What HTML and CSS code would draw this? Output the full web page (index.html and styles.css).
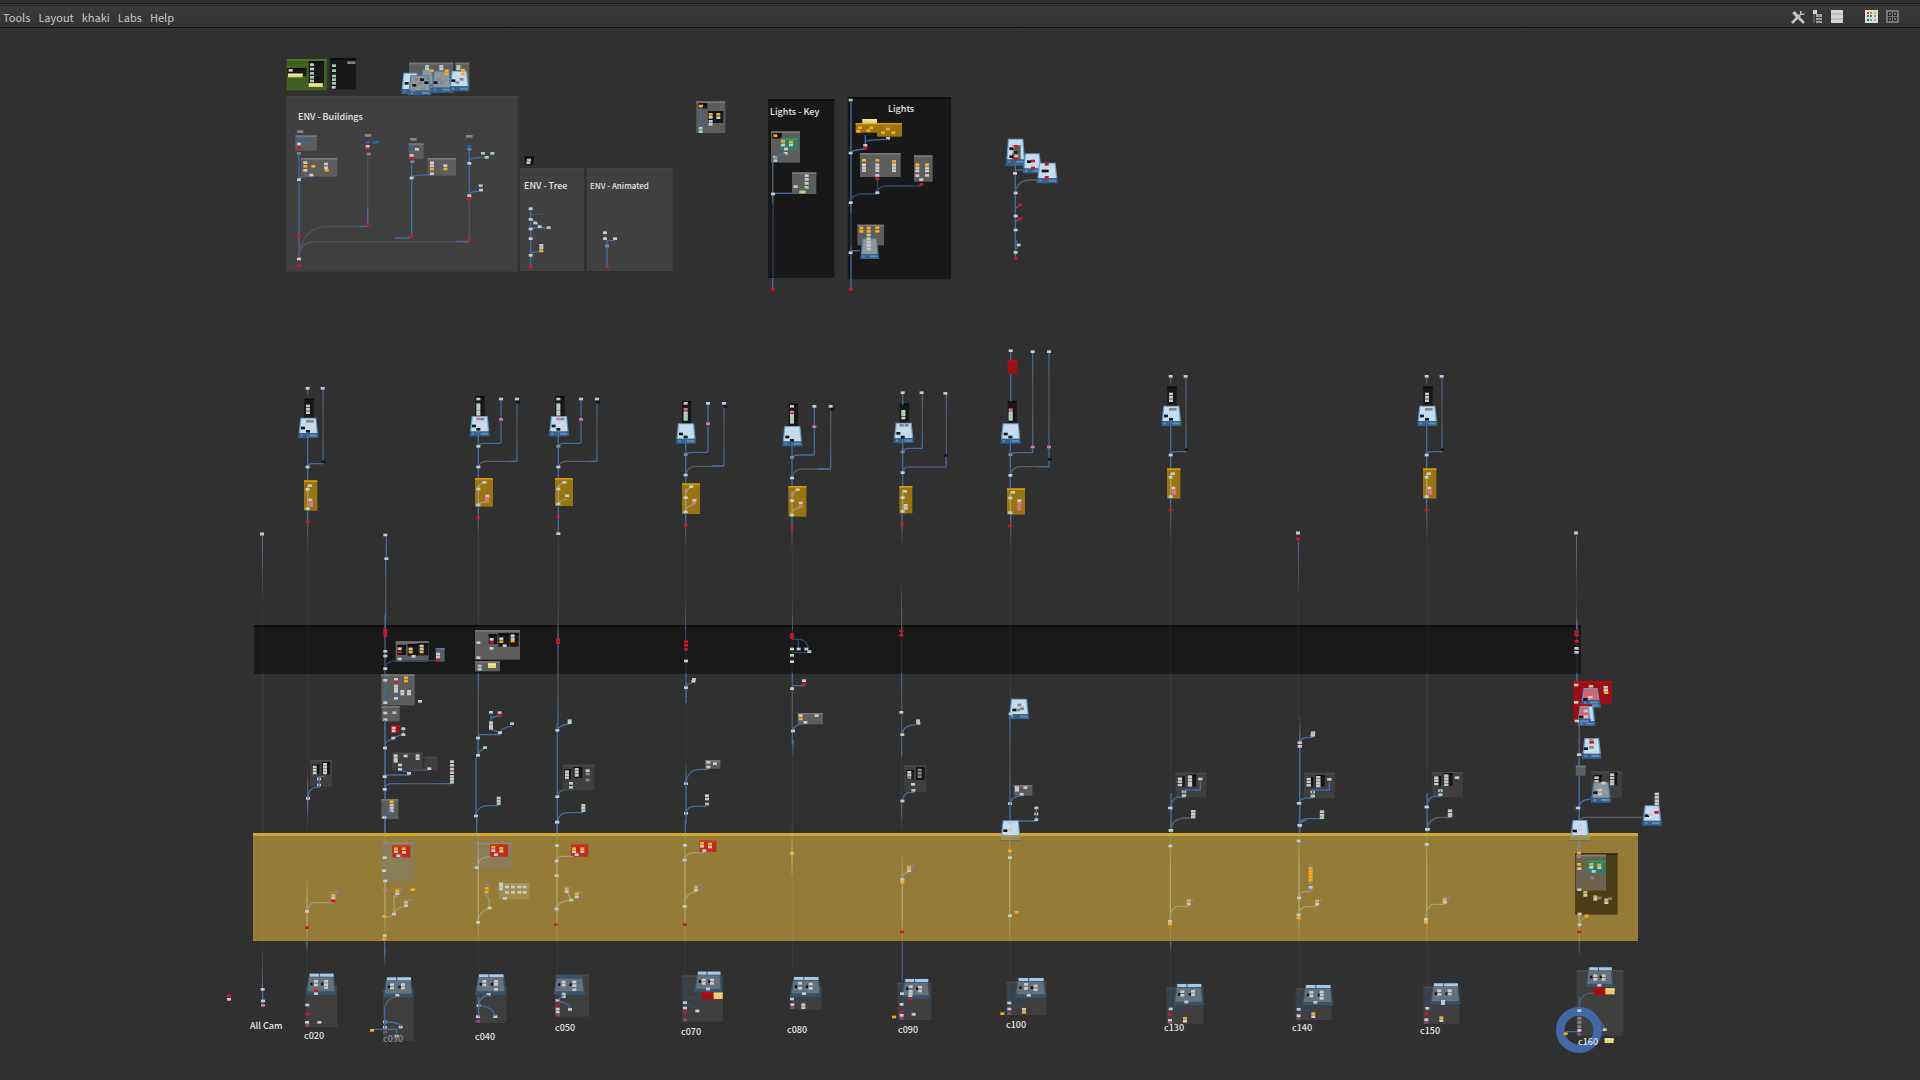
FILE: index.html
```html
<!DOCTYPE html>
<html lang="en">
<head>
<meta charset="utf-8">
<title>Network editor</title>
<link rel="stylesheet" href="styles.css">
</head>
<body>
<header class="menubar">
  <nav class="menus" aria-label="Main menu">
    <button type="button">Tools</button>
    <button type="button">Layout</button>
    <button type="button">khaki</button>
    <button type="button">Labs</button>
    <button type="button">Help</button>
  </nav>
  <div class="tools">
    <button type="button" aria-label="Settings"><svg width="14" height="14" viewBox="0 0 14 14"><path d="M1 13 9 5M5 5l8 8" stroke="#c4c4c4" stroke-width="2.6" fill="none"/><path d="M1 3l3-2 3 4-2 2zM9 1v4h4l1-2-2 1-2-1 1-2z" fill="#c4c4c4"/></svg></button>
    <button type="button" aria-label="Tree view"><svg width="10" height="14" viewBox="0 0 10 14"><path d="M0 0h4v4H0z" fill="#d0d0d0"/><path d="M3 4h6v3H3zM3 8h6v2H3zM3 11h6v2H3z" fill="#a9a9a9"/><path d="M1 4v9M6 4v9" stroke="#777" fill="none"/></svg></button>
    <button type="button" aria-label="List view"><svg width="12" height="14" viewBox="0 0 12 14"><path d="M0 0h12v13H0z" fill="#d6d6cf"/><path d="M0 4h12M0 9h12" stroke="#a4a49c"/></svg></button>
    <button type="button" aria-label="Colour palette" class="apart"><svg width="13" height="13" viewBox="0 0 13 13"><path d="M0 0h13v13H0z" fill="#dddddd"/><path d="M2 2h2v2H2z" fill="#c33"/><path d="M5 2h2v2H5z" fill="#d80"/><path d="M9 2h2v2H9z" fill="#db2"/><path d="M2 5h2v2H2z" fill="#36c"/><path d="M5 5h2v2H5z" fill="#294"/><path d="M9 5h2v2H9z" fill="#c77"/><path d="M2 9h2v2H2z" fill="#448"/><path d="M5 9h2v2H5z" fill="#3a8"/><path d="M9 9h2v2H9z" fill="#aa9"/></svg></button>
    <button type="button" aria-label="Shape palette"><svg width="13" height="13" viewBox="0 0 13 13"><path d="M0 0h13v13H0z" fill="#777"/><path d="M2 2h4v4H2zM7 2h4v4H7zM2 7h4v4H2zM7 7h4v4H7z" fill="#2b2b2b"/><path d="M3 4h2M8 4h2M3 9h2M8 9h2" stroke="#bbb"/></svg></button>
  </div>
</header>
<main>
<svg class="network" viewBox="0 28 1920 1052" role="img" aria-label="Node network">
  <defs>
    <linearGradient id="in" x1="0" y1="0" x2="0" y2="1"><stop offset="0" stop-color="#666" stop-opacity="0"/><stop offset=".5" stop-color="#777" stop-opacity=".5"/><stop offset="1" stop-color="#4775b5"/></linearGradient>
    <linearGradient id="out" x1="0" y1="0" x2="0" y2="1"><stop offset="0" stop-color="#4775b5"/><stop offset=".5" stop-color="#777" stop-opacity=".5"/><stop offset="1" stop-color="#666" stop-opacity="0"/></linearGradient>
    <linearGradient id="mid" x1="0" y1="0" x2="0" y2="1"><stop offset="0" stop-color="#41699c"/><stop offset=".35" stop-color="#555555"/><stop offset=".6" stop-color="#555555"/><stop offset="1" stop-color="#41699c"/></linearGradient>
    <linearGradient id="wash" x1="0" y1="0" x2="0" y2="1"><stop offset="0" stop-color="#c9c08f" stop-opacity=".1"/><stop offset=".3" stop-color="#c9c08f" stop-opacity=".6"/><stop offset=".7" stop-color="#c9c08f" stop-opacity=".6"/><stop offset="1" stop-color="#c9c08f" stop-opacity=".15"/></linearGradient>
  </defs>
  <rect class="band-dark" x="254" y="625" width="1327" height="49"/>
  <rect class="band-dark-top" x="254" y="625" width="1327" height="2"/>
  <rect class="band-gold" x="253" y="834" width="1385" height="107"/>
  <rect class="band-gold-top" x="253" y="833" width="1385" height="3"/>
  <rect class="band-gold-foot" x="253" y="940" width="1385" height="1"/>
  <g id="graph"></g>
  <g class="titles">
    <text x="298" y="120">ENV - Buildings</text>
    <text x="524" y="189">ENV - Tree</text>
    <text x="590" y="189" class="small">ENV - Animated</text>
    <text x="770" y="115">Lights - Key</text>
    <text x="888" y="112">Lights</text>
    <text x="250" y="1029">All Cam</text>
    <text x="304" y="1039">c020</text>
    <text x="383" y="1042" class="faded">c030</text>
    <text x="475" y="1040">c040</text>
    <text x="555" y="1031">c050</text>
    <text x="681" y="1035">c070</text>
    <text x="787" y="1033">c080</text>
    <text x="898" y="1033">c090</text>
    <text x="1006" y="1028">c100</text>
    <text x="1164" y="1031">c130</text>
    <text x="1292" y="1031">c140</text>
    <text x="1420" y="1034">c150</text>
    <text x="1578" y="1045">c160</text>
  </g>
</svg>
</main>
<script src="graph.js"></script>
</body>
</html>
```
FILE: styles.css
```css
* { box-sizing: border-box; }
body {
  margin: 0;
  background: #303030;
  color: #c8c8c8;
  font-family: "Noto Sans CJK SC", "Open Sans", sans-serif;
}
.menubar {
  display: flex;
  align-items: center;
  justify-content: space-between;
  height: 28px;
  padding: 6px 21px 0 3px;
  border-bottom: 1px solid #121212;
  background: linear-gradient(#303030 0 3px, #202020 3px 4px, #3b3b3b 4px 5px, #242424 5px 6px, #3a3a3a 6px, #333333);
}
.menus, .tools { display: flex; align-items: center; }
.menus { gap: 8px; }
.tools { gap: 8px; }
.menubar button {
  display: flex;
  padding: 0;
  border: 0;
  background: none;
  color: inherit;
  font: inherit;
  font-size: 11px;
  line-height: 16px;
}
.tools .apart { margin-left: 14px; }
.network { display: block; width: 100%; height: auto; }

.band-dark { fill: #191919; }
.band-dark-top { fill: #0d0d0d; }
.band-gold { fill: #947b38; }
.band-gold-top { fill: #d4a62c; }
.band-gold-foot { fill: #a98325; }
.titles { fill: #e6e6e6; font-size: 9px; font-weight: 500; }
.titles .small { font-size: 8px; }
.titles .faded { fill: #8c8c8c; }

.in { fill: url(#in); }
.out { fill: url(#out); }
.mid { fill: url(#mid); }
.wash { fill: url(#wash); }
.dim { fill: #ffffff; fill-opacity: .04; }
.dusk { fill: #222c3a; }

.node-w { fill: #c9c9c9; }
.node-r { fill: #cb1528; }
.node-o { fill: #f6ab23; }
.node-b { fill: #2d5fb4; }
.node-d { fill: #858585; }
.node-p { fill: #e0718e; }
.node-m { fill: #8b4a70; }
.node-k { fill: #131820; }
.node-g { fill: #a8cbb4; }
.node-l { fill: #a9e08d; }

.panel { fill: #404040; }
.panel-top { fill: #464646; }
.grey { fill: #5d5d5d; }
.grey-top { fill: #777777; }
.slate { fill: #3f3f3f; }
.slate-top { fill: #4a4a4a; }
.black { fill: #181818; }
.black-top { fill: #0a0a0a; }
.gold { fill: #997512; }
.gold-top { fill: #d9960c; }
.yellow { fill: #e3d878; }
.yellow-top { fill: #eee8a0; }
.green { fill: #415f20; }
.green-top { fill: #4b7c22; }
.teal { fill: #2c8067; }
.teal-top { fill: #319576; }
.red { fill: #991116; }
.red-top { fill: #c0090d; }
.scarlet { fill: #bd2c1c; }
.scarlet-top { fill: #c93a22; }
.haze { fill: #8b7c5a; }
.haze-top { fill: #908878; }
.umber { fill: #4a3d18; }
.umber-top { fill: #332a12; }
.taupe { fill: #6b624d; }
.taupe-top { fill: #858075; }
.straw { fill: #a08d50; }
.straw-top { fill: #a59662; }
.peach { fill: #f3c96c; }
.peach-top { fill: #f7d78a; }

.wire { fill: none; stroke: #456ca0; stroke-width: 4; }
.wire.grey { stroke: #5c5f66; }
.wire.plum { stroke: #5a4c5c; }
.wire.violet { stroke: #5e4f8c; }
.wire.pale { stroke: #a69d70; }
.wire.navy { stroke: #2f4a6b; }

.card-face { fill: #c5dcec; }
.card-side { fill: #6d9bc6; }
.card-base { fill: #34618f; }
.card-mark { fill: #5f8db8; }
.rose .card-face { fill: #cf6670; }
.mist .card-face { fill: #8d989d; }
.mist .card-side { fill: #52779a; }
.desk-top { fill: #a9c8e4; }
.desk-edge { fill: #36536e; }
.desk-face { fill: #65727b; }
.ring { fill: none; stroke: #4169a5; stroke-width: 26; }
```
FILE: graph.js
```js
// Each cluster: offset x, offset y, horizontal scale, vertical scale, drawing list.
// B box | W wire | F fading vertical | T card | K console | w r o b d p m k g l nodes
const tower = `
F out 81 58 85
F mid 127 60 276
B black 73 86 28 58
w 83,55 128,55
T 54 143 62 61
w 84,108 84,118 84,128
d 84,154 95,154
k 69,174 84,184
W wire M83 190V330
W wire M83 291Q84 281 98 281H131
k 131,275
w 83,291
B gold 72 331 40 91
W wire.pale M83 345V415
w 90,347 83,358 91,390 83,416
p 93,398 93,406
F out 81 420 550
r 83,455`;

const graph = [
[0, 0, 1, 1, `
F out1 262 536 610
F dim1 262 610 960
F in1 262 950 990
w1 262,534 1298,533 1576,533
r1 1298,539
F out1 1298 542 600
F dim1 1298 600 720
F out1 1576 536 600
F in1 1576 590 640
F dim1 307 540 800
F dim1 1170 520 770
F dim1 1427 520 770
F dim1 1010 540 700
F in1 385 590 628
F dim1 478 540 626
F in1 478 670 730
F dim1 558 540 640
F dim1 685 550 630
F in1 685 600 640
F dim1 792 550 620
F in1 792 600 640
F in1 901 580 630
F dim1 1170 940 1010
F dim1 1299 940 1010
F dim1 1427 940 1010
F dim1 792 750 970
F dim1 1010 940 990`],

[270, 40, 1/3, 1/3, `
B green 50 57 121 94
B black 52 84 57 25 116 64 46 70
B yellow 54 101 44 11 116 130 42 11
w 62,91 126,74 126,87
g 126,100 126,112 126,123
B black 181 54 77 94
d 238,68 250,68
g 192,77 192,92 192,108 192,119 192,130
w 191,142
B grey 417 68 133 90 556 68 42 80
T.mist 450 88 44 60
g 471,79 514,79 565,79
w 471,87 514,87 565,86
T 393 98 56 64
T.mist 484 92 62 66
T 538 92 60 62
T.mist 414 106 70 60
o 485,92 530,92 530,102 579,90 579,102
k 410,130 433,136 497,128 550,122 456,119 469,128
d 440,118 470,116 450,130 460,145 430,150 508,118 516,128 575,118 562,128
B panel 48 168 695 527 750 385 192 308 951 385 257 308
B black 764 350 28 26
g 777,360 775,368
B grey 76 286 65 46 93 354 109 56 416 310 45 46 473 354 85 53
d 87,275 94,275 290,286 298,286 426,298 434,298 594,289 602,289 87,340 296,342 427,365 598,328
W wire M87 340V655M87 414Q90 410 125 408
W wire.plum M293 344V556M87 650Q95 560 175 559H293M87 655Q90 608 130 606H598V475
W wire M293 500V553M598 320V470M598 357Q605 354 650 352M598 460Q605 454 633 453M425 368V410Q440 404 486 404M425 410V592
W wire M375 594H420M560 604H598M270 559H293
b 87,298 100,303 112,303 293,307 315,308 322,306 425,320 598,318
w 87,312 87,419 106,368 106,391 168,372 168,383 124,405 293,319 441,328 425,346 425,414 486,368 486,377 486,401 526,377 598,370 598,467 650,352 633,450
g 639,340 667,340 632,437
r 87,324 293,327 425,355 87,588 293,553 423,588 598,477 598,600 87,677
o 106,379 130,379 170,391 486,387 526,387
w 87,657
B slate 775 520 52 45
W wire M782 506V680M782 541H790L810 560M782 566Q790 563 835 563M782 640Q788 635 814 634
w 782,506 782,538 796,549 809,560 782,567 782,596 782,646 814,616 814,624
g 836,563
o 814,633
r 782,681 1011,681
W wire M1011 600V680M1011 602H1035M1005 578V596
w 1005,578 1005,596 1035,596
d 1011,618`],

[680, 80, 1/3, 1/3, `
B grey 49 64 87 95
B black 56 70 26 16 84 94 46 35
W wire M62 80V155M62 143Q70 136 92 136
o 63,78 92,103 115,103
w 92,112 115,113 92,124 92,133
g 62,145 62,155
B black 264 57 199 537 503 52 310 546
W wire M278 240V590
F mid 276 240 400
W wire M278 595V625M513 65V625
F dusk 276 370 590
F dusk 511 400 500
W wire M278 340H366
B grey 273 154 87 94 336 277 73 65
B black 277 160 28 16
B teal 301 175 51 35
o 286,167 309,184 333,186
w 309,195 333,195 318,207 317,220 286,231
g 286,242
W wire M286 232Q290 226 317 222
w 380,287 380,298 380,310 347,320 279,342
g 380,322
l 364,336 371,336
r 278,628 513,628
B gold 527 129 64 29 591 129 75 41
B yellow 547 117 44 13
o 540,143 574,143 624,147 565,152 535,154 609,158 640,158
w 624,175 556,196 512,219
W wire M556 165V192M556 185Q565 179 624 178M512 216Q520 210 556 207
r 556,204
B grey 540 219 122 72 702 226 56 79
o 552,241 592,241 642,244 712,254 741,254
w 552,254 552,263 552,272 592,254 592,263 592,272 642,254 642,263 642,272 712,264 712,273 741,264 741,273 712,287 741,286 724,299 592,286
W wire.navy M592 300V335M592 335Q595 318 620 318H724M512 365Q515 345 540 342H592
r 592,296 724,313
w 592,338 512,368
B grey 532 434 80 62
o 544,444 544,454 566,444 566,454 592,443 592,454
T.mist 540 475 58 62
l 566,465
w 566,476 566,486 566,496 566,507 512,518
W wire M512 512H540
g 512,60
T 977 176 60 82
T 1028 220 58 60
T 1070 248 64 62
B grey 996 195 26 46
w 1000,200 1000,216 1009,228
k 994,206 994,230 1007,217 1091,273 1047,245 1100,273
r 1007,199 1007,237 1059,243 1059,264 1100,253 1100,292
W wire M1006 248V530M1006 270H1030
W wire.grey M1006 338Q1012 302 1045 300H1072
W wire M1007 385L1018 376M1007 425L1018 417M1007 480L1016 494L1008 508
r 1020,375 1020,416 1007,535
w 1005,280 1007,339 1007,408 1007,450 1016,495
l 1007,517`],

[280, 370, 1/3, 1/3, tower],
[1143, 358, 1/3, 1/3, tower],
[1399, 358, 1/3, 1/3, tower],

[280, 370, 1/3, 1/3, `
w 316,495 319,566
W wire M319 500V562
F mid 315 570 750
B black 586 78 28 60 826 78 28 60
w 595,87 835,87
g 595,104 595,118 835,104 835,118
w 595,111 595,126 595,133 835,111 835,126 835,133
T 568 138 62 61
T 806 138 62 61
p 595,147 835,147
d 607,147 847,147
k 582,168 595,178 821,168 835,178
W wire M595 185V325M663 92V219M595 228Q600 220 612 220H663M835 185V325M903 92V219M835 228Q840 220 852 220H903
F mid 709 95 273
F mid 949 95 273
W wire.grey M595 290Q600 275 618 274H711M835 290Q840 275 858 274H951
W wire M680 274H712M920 274H952
k 714,96 954,96
w 663,87 711,87 903,87 951,87 595,229 595,291 835,291
d 835,229
p 663,148 903,148
B gold 585 324 54 86 825 324 54 84
W wire.pale M595 352Q600 340 613 337M595 405V345M595 404Q600 396 621 394M835 352Q840 340 853 337M835 404V345M835 400Q840 390 861 388
w 613,337 595,357 622,378 595,405 853,337 835,357 861,377 835,402
p 621,388 621,395
F out 593 410 530
F dim 593 530 750
W wire M835 410V488
r 595,443 835,440
w 835,491
F dim 833 495 750`],

[640, 340, 1/3, 1/3, `
B black 126 183 28 68 446 191 28 68 779 191 28 58 1103 184 28 64
w 137,190 456,199
p 137,208 456,216 1112,209
w 137,218 137,228 137,238 456,226 456,236 456,247 790,214 790,224 790,234 1112,218 1112,228 1112,238
g 137,223 137,233 456,231 456,241 790,219 1112,223 1112,233
T 107 250 62 61
T 426 258 62 61
T 760 248 62 61
T 1081 250 62 61
d 785,256 800,256
k 123,282 137,291 442,291 456,301 775,280 788,291 1097,282 1111,291
W wire M137 298V430M204 192V336M137 344Q142 337 155 337H204M456 306V440M523 201V345M456 352Q462 345 474 345H523
F mid 250 193 377
F mid 570 202 386
F mid 845 160 325
F mid 917 163 382
F mid 1176 38 320
F mid 1225 38 322
W wire.grey M137 405Q142 380 165 379H252M456 412Q462 388 484 387H572M1111 405Q1116 381 1140 380H1227
W wire M215 378H252M535 387H572M1190 380H1227V325
W wire M788 160V195M788 300V440M788 335Q792 325 805 325H847M1112 36V60M1112 102V185M1111 300V445M1111 344Q1116 338 1130 338H1178V325
W wire.violet M788 398Q790 381 805 381H918V345
k 256,199 576,208 917,346 1230,358
w 204,190 252,190 523,199 572,199 788,158 845,158 916,160 1112,32 1178,35 1227,35 137,405 456,414 788,398 1111,406
d 137,344 456,352 788,336 1111,344
p 204,251 523,260 1178,321 1227,321
B red 1103 60 29 42
B gold 126 430 54 92 445 438 54 92 778 438 39 82 1101 445 54 79
W wire.pale M137 445V516M137 465Q140 445 154 440M137 510Q140 498 162 494M456 453V524M456 473Q460 453 473 449M456 518Q460 506 482 502M788 450V514M1111 455V518
w 154,440 137,473 163,481 137,516 473,449 456,482 482,489 456,525 795,454 788,473 797,496 797,505 788,514 1119,457 1111,474 1138,482 1111,518
p 162,489 482,498 1138,490 1138,499 1138,508
F out 135 520 635
F out 454 530 635
F out 784 520 630
F out 1110 522 635
r 137,555 456,564 787,552 1111,557`],

[240, 610, 1/3, 1/3, `
F dim 69 190 670
F in 201 480 570
F out 201 570 650
F mid 433 15 668
B grey 467 94 99 61 587 114 27 41
B black 472 105 26 30 503 102 32 35 535 100 30 36
W wire.navy M435 170Q440 152 478 152H590
r 436,60 436,68 436,77 479,126 594,150
w 436,124 436,138 436,176 479,116 479,147 512,117 521,139 545,108 545,117 594,132 594,141
b 594,122
o 512,126 545,126
B grey 424 193 100 93 425 288 54 46
W wire M435 200V280M435 278Q440 270 468 266Q480 255 508 250M468 220V262
w 436,211 468,208 468,228 468,236 468,244 487,244 487,252 507,244 507,252 468,265 436,278 540,274 436,309 436,329
r 468,216
o 498,203 498,213
g 463,308
W wire M435 330V665M435 405Q438 390 458 388Q470 376 490 374V360M434 495H507V489M480 460L481 480L507 488M481 463Q500 445 535 447M507 480H568M434 535Q438 521 455 521H490M590 521H635
W wire.grey M490 521H590
F dim 433 290 300
B red 451 346 28 23
w 461,354 461,363 490,356 490,374 460,384 435,414
B slate 456 428 92 53 554 440 38 41
w 467,437 467,446 467,454 497,438 533,437 533,446 480,465 480,478 507,490 568,476 434,500 434,538
w 636,455 636,466 636,477 636,488 636,499 636,508
g 636,517
B grey 424 567 51 60
o 455,575
w 455,585 455,594 455,603 433,622
W wire M433 620Q436 608 455 606
B grey 705 60 135 89 705 154 75 30
B black 746 72 26 30 775 70 32 40 808 70 28 40
w 715,98 755,88 784,86 818,77 818,86 794,107 755,115 715,143
r 755,97
o 784,95 818,93
B yellow 744 160 24 14
g 719,168 719,178
F mid 713 190 440
W wire M714 380V430L708 450V615M714 374H780V368L753 358V315M753 325Q765 318 779 318M780 368Q785 352 817 349M714 436Q720 418 735 415M708 612Q715 587 745 587H776
w 753,307 779,308 753,338 753,347 753,355 780,368 714,384 714,436 776,564 776,573 708,618
g 816,341 735,413 776,581
r 779,315
F out 708 620 670
F mid 952 100 345
F in 952 5 90
W wire M952 340V670M952 360Q955 345 988 342M952 560Q956 540 978 539H993M993 530V518H1040V490M952 636Q956 608 985 608H1030
r 954,90 954,98
g 989,332
w 989,338 952,361
B slate 968 464 95 76
B black 973 478 20 30 1001 472 26 32
w 981,485 981,494 981,503 1010,478 1010,487 1010,496 1043,482 993,520 952,560 1030,586 1030,594 952,636
d 1043,492 1043,510
g 993,532 1030,602
B slate 210 450 66 80
B black 216 464 22 28 246 456 24 38
w 224,471 224,480 224,489 255,463 255,472 255,481 255,489 237,507 204,565
g 237,525
W wire M204 565Q206 535 225 532H237V500H255`],

[640, 610, 1/3, 1/3, `
F dusk 136 60 190
F mid 136 190 280
F in 136 450 520
W wire M138 215V262M138 228Q140 222 155 220
r 138,95 138,106 138,118
w 138,153 138,233 160,214 138,521 138,610 201,557 201,567 205,457 225,461 205,471
g 162,208 201,582
B grey 195 450 46 26
w 205,457 225,461 205,471
W wire M138 521V640M138 520Q142 478 180 478H205M138 608Q142 589 165 589H201
F dim 136 280 450
F dusk 454 60 190
F mid 455 190 400
F out 457 390 450
W wire.navy M456 88H480Q500 90 505 115M475 90V115M456 128H505
W wire M456 227H493V222M459 360Q463 344 490 342
r 456,74 456,83 493,222
w 456,117 476,117 499,117 508,125 456,155 456,236 492,212
l 456,136
B grey 473 309 76 34
o 482,327
w 482,317 530,317 496,337 459,363
F mid 783 0 75
F dusk 783 75 190
F mid 783 190 440
F out 783 570 665
F dim 783 440 570
r 784,63 784,76
W wire M787 372Q790 345 828 344M787 572Q790 550 808 547H820V515
w 784,307 787,374 835,340 787,573
g 834,332
B slate 793 466 66 80
B black 799 480 22 28 828 472 26 38
w 808,487 808,496 819,523
d 808,503 839,480 839,490 839,500
g 820,541
F dim 1110 235 265
T 1106 266 62 61
k 1123,300
d 1138,285 1146,296 1134,300
w 1112,312
F mid 1108 325 580
B grey 1121 525 56 32
w 1131,533 1156,533 1131,541 1145,553 1110,581 1189,594 1189,612
W wire M1110 580V660M1111 578Q1114 560 1140 558M1112 633H1189V600
g 1189,629
T 1081 631 62 61
B straw 1082 675 60 16
k 1096,662
w 1112,640 1112,660`],

[1100, 610, 0.37, 1/3, `
F dim 189 190 540
F dim 882 190 520
F in 538 310 400
W wire M540 395V670M192 550V670M884 550V670M540 398Q542 383 560 382H577
g 576,368
w 575,376 540,398 540,409
B slate 204 488 84 74 552 488 83 76 898 486 83 76
B black 209 500 20 30 236 494 24 36 557 502 20 30 583 496 24 34 902 498 20 30 929 490 24 38
w 216,506 216,515 216,525 243,500 243,509 243,518 243,526 271,507 227,545 564,507 564,516 564,526 590,502 590,511 590,520 590,528 620,508 575,546 909,503 909,512 909,522 936,497 936,506 936,515 936,524 965,503 920,542
W wire M192 590Q194 563 212 562H227V540H271V515M538 578Q540 565 560 564H575V540H620V515M884 590Q886 560 905 559H920V540
g 227,557 575,558 920,554
W wire.grey M192 658Q196 625 230 624H252M884 656Q888 624 920 622H945
W wire M540 644Q542 627 560 626H600
w 190,594 192,661 252,604 252,613 538,580 540,646 600,605 600,615 883,591 885,658 946,602 946,612
g 252,621 600,623 946,618
F dusk 1287 50 190
W wire M1289 60V30M1289 190V215
r 1288,66 1288,75 1288,94
w 1288,115 1288,127
T 1294 234 60 60
B red 1279 213 105 68 1279 282 50 54
T.rose 1300 234 52 48
T 1290 288 50 60
T.rose 1290 290 38 48
w 1287,225 1287,277 1289,333 1367,232 1367,241 1325,262 1313,303 1313,320
g 1327,229
o 1368,248
k 1312,268 1300,321
W wire.grey M1295 345V435
W wire M1295 440V635
T 1302 384 54 62
r 1329,397
k 1313,416
d 1328,388 1328,412
w 1295,434
B grey 1286 467 27 30
B slate 1328 484 83 79
B black 1334 496 22 36 1376 488 22 38
w 1342,503 1342,514 1342,525 1384,494 1384,504 1384,514 1384,522
T.mist 1326 516 56 62
w 1361,519 1351,540 1351,552
k 1339,548
W wire M1292 594Q1298 568 1326 567
W wire.grey M1298 630Q1302 622 1315 622H1466
w 1292,594 1505,552 1505,562 1505,572 1505,581
T 1465 586 54 61
r 1504,607
k 1478,617
w 1488,614
T 1270 630 54 62
B straw 1270 675 54 16
k 1283,663
w 1297,645 1297,660`],

[210, 820, 1/3, 1/3, `
F dim 289 0 40
F out 289 364 400
F wash 289 180 360
F wash 523 45 360
W wire M524 0V40M524 364V395
F out 522 390 440
B haze 515 66 98 120 792 68 114 80
B scarlet 547 76 54 36 840 72 54 38 1083 72 52 38
o 558,86 581,86 850,82 874,85 1092,86 1117,86
w 558,95 582,97 565,107 850,92 874,94 858,104 1092,95 1117,95 1100,104 524,113 522,152 526,183 800,143
p 526,211
W wire.pale M291 272Q295 250 315 248H370M524 292Q530 290 540 290L552 282V228H562M552 280Q556 262 588 260M805 130Q808 112 840 110M804 305Q806 272 838 266V240L830 225M1040 123Q1042 110 1055 109H1090M1040 265Q1042 245 1085 240L1070 215
B haze 360 214 26 22 555 205 24 20 583 238 24 20 1060 199 24 20 1094 214 24 20
B straw 868 190 90 48
o 370,226 562,212 588,247 608,209 523,289 523,357 830,205 830,216 1070,207 1100,222
w 370,234 562,221 588,257 552,282 524,347 291,274 873,191 873,199 873,207 891,201 909,201 928,201 944,201 891,217 909,217 928,217 944,217 885,235 839,264 804,307 1070,215 1100,231 1040,267 1041,77 1040,123 1040,167 1041,7
r 370,243 291,323 1039,314
d 830,194 830,226
l 1084,240
W wire M800 0V40M1041 10V40
F wash 803 40 360
F wash 1039 45 360
F dim 289 395 460
F dim 803 364 460
F dim 1041 364 460
W wire M158 510V555M292 520V605M291 555Q294 522 318 520M292 595H310Q325 597 328 605
w 158,508 159,543 57,538
p 159,556
r 57,527
B slate 287 500 94 122 519 510 92 152 797 500 93 109 1036 464 101 126
K 287 460 92 64
K 519 471 92 60
K 795 462 94 62
K.plain 1030 464 96 60
w 318,484 318,495 348,484 348,494 318,521 292,555 291,607 328,607 546,494 546,504 579,494 579,504 562,526 525,606 525,622 572,621 560,648 823,484 823,495 858,484 858,493 858,508 836,523 806,557 804,590 856,590 1061,486 1061,495 1093,486 1093,497 1093,509 1061,522 1061,530 1043,541 1080,568 1043,567 1043,576
r 318,512 292,583 1041,555
m 292,616 525,636 804,604 1043,585
g 348,503
W wire M524 560V625M525 606Q570 606 572 620M486 628H560V640M806 530V590M806 557Q850 560 856 588M806 555Q808 530 836 525M1043 545Q1075 545 1080 565M1061 525L1043 540
W wire.grey M525 560Q530 535 562 530
o 486,631`],

[670, 820, 1/3, 1/3, `
W wire M46 0V40
F wash 43 45 360
F wash 364 45 170
F dim 364 0 40
F wash 695 100 360
F wash 1017 45 360
B scarlet 88 62 51 34
o 96,70 120,72 366,100 697,187 1020,93 1040,277
w 96,79 120,81 103,92 45,76 44,120 44,259 697,178 1020,113 1020,287
W wire.pale M45 118Q48 100 70 98H103M45 245Q48 220 78 215M697 175Q698 160 717 155
B haze 70 193 26 22 712 134 22 22
o 78,202 717,143
w 78,211 717,152
r 44,314 696,336
W wire.violet M697 365V480
F dim 43 364 540
B slate 36 466 123 139 364 500 90 69 682 488 102 112 1010 485 119 100
K 72 454 86 62
K 360 470 94 60
K 694 476 88 60
K 1034 473 96 60
w 101,480 101,490 126,480 126,490 114,507 390,490 390,505 422,492 422,505 402,521 722,500 750,502 750,513 722,514 721,527 1068,493 1068,505 1097,498 1097,509 1076,526
B red 96 516 36 22
B peach 131 518 27 19
W wire.navy M45 480V600M45 545Q50 530 96 530M45 552Q78 555 82 570M367 545H400V555M697 480V590M697 570H725L731 580M672 590H695M1018 490V575M1018 550Q1022 535 1045 532M1018 555H1055L1062 566M997 580L1018 568
w 45,548 45,564 82,573 366,537 367,554 400,554 400,563 696,521 695,553 695,586 731,583 1018,549 1018,567 1062,568
r 45,577 721,538 694,577
m 45,600 367,563 695,595 1018,581
o 672,591 997,581 1062,577
g 722,521`],

[1140, 820, 1/3, 1/3, `
F wash 89 45 360
F wash 475 45 360
F wash 858 45 360
F out 90 364 400
W wire M92 0V35M478 0V40M862 0V35M478 14Q484 2 500 0
W wire.grey M92 28Q95 8 110 0M862 26Q866 6 878 0
F wash 1316 60 400
w 92,31 479,16 862,28 91,78 476,63 860,73
W wire.pale M91 300V290Q92 262 115 259H146M476 285Q478 262 500 260H530M478 230Q480 215 495 215H512M858 298V285Q860 258 880 253H914
B haze 139 236 24 20 524 238 24 20 908 230 24 20
o 146,243 531,244 914,239 512,145 512,154 512,163 512,172 512,181 90,312 476,294 858,307
w 146,252 531,253 914,247 512,202 477,234 476,285 858,298 90,304
d 512,135 512,190 512,211
B umber 1305 100 128 184
B taupe 1308 104 90 108
B teal 1342 122 55 38
o 1354,133 1378,135 1317,99 1317,133 1336,217 1366,230 1399,239 1340,288
w 1354,142 1378,143 1361,154 1318,146 1318,209 1336,226 1366,238 1399,248 1319,282 1319,314
d 1317,80 1317,90 1317,110 1357,174 1378,234 1410,236
W wire.pale M1319 310Q1322 294 1340 292
r 1318,336
B slate 80 502 110 110 467 505 108 95 850 500 108 112 1310 450 140 197
K 100 491 92 64
K 486 494 94 62
K 870 489 92 64
K 1336 441 86 60
w 127,515 127,526 159,514 159,524 139,546 514,517 514,528 545,516 545,525 545,535 526,547 898,512 898,523 929,512 929,522 909,544 909,551 1366,467 1366,478 1391,467 1391,478 1378,496
B red 1360 503 36 22
B peach 1396 505 28 18
W wire.navy M91 500V600M91 575H110Q132 580 135 592M476 510V590M476 572H520V578M860 500V600M860 568Q900 572 904 590M91 565L110 555M476 565L490 555
W wire.grey M1318 570Q1318 525 1345 520H1362
F mid 1316 530 640
C 1317 630 56
W wire M1318 572Q1385 590 1394 628M1278 635H1316
w 92,567 90,601 135,604 476,568 476,587 520,590 862,565 859,599 904,602 1318,572 1318,631 1394,629
r 90,584 859,581
o 135,595 520,581 904,593 1277,641
m 90,609 476,595 859,607 1318,643
d 1318,595 1318,607 1318,620
B yellow 1394 655 27 14`]
];

const rect = (cls, x, y, w, h) => `<rect class="${cls}" x="${x}" y="${y}" width="${w}" height="${h}"/>`;
const poly = (cls, pts) => `<polygon class="${cls}" points="${pts}"/>`;

function card(cls, x, y, w, h) {
  const base = y + h * .76, r = x + w;
  return `<g class="${cls}">` +
    poly('card-side', `${x + 7},${y} ${r - 7},${y} ${r - 2},${base} ${x + 2},${base}`) +
    poly('card-face', `${x + 10},${y + 3} ${r - 10},${y + 3} ${r - 6},${base} ${x + 6},${base}`) +
    poly('card-base', `${x + 2},${base} ${r - 2},${base} ${r},${y + h} ${x},${y + h}`) +
    rect('card-mark', x + 8, base + 4, 6, 6) + rect('card-mark', r - 28, base + 4, 22, 6) + '</g>';
}

function desk(cls, x, y, w, h) {
  const r = x + w;
  let out = poly('desk-edge', `${x + 10},${y} ${r - 8},${y} ${r},${y + h} ${x},${y + h}`) +
    poly('desk-face', `${x + 10},${y + 12} ${r - 10},${y + 12} ${r - 6},${y + h - 10} ${x + 6},${y + h - 10}`);
  if (cls !== 'plain') out += rect('desk-top', x + 12, y + 1, w * .3, 9) + rect('desk-top', x + 15 + w * .3, y + 1, w * .45, 9);
  return out + rect('node-k', x + 14, y + h / 2 - 4, 7, 8) + rect('node-k', x + w / 2, y + h / 2 - 4, 7, 8);
}

function draw(line) {
  const [head, ...args] = line.trim().split(/\s+/);
  const [op, variant = ''] = head.split('.');
  if (op === 'W') {
    return `<path class="${args[0].replace('.', ' ')}" d="${args.slice(1).join(' ')}"/>`;
  }
  if (op === 'F') {
    const unit = args[0].endsWith('1');
    const [x, y1, y2] = args.slice(1).map(Number);
    return rect(args[0].replace('1', ''), x, y1, unit ? 1 : 4, y2 - y1);
  }
  if (op === 'B') {
    let out = '';
    const n = args.slice(1).map(Number);
    for (let i = 0; i < n.length; i += 4) {
      out += rect(args[0], n[i], n[i + 1], n[i + 2], n[i + 3]) + rect(args[0] + '-top', n[i], n[i + 1], n[i + 2], 5);
    }
    return out;
  }
  if (op === 'T') return card(variant, ...args.map(Number));
  if (op === 'K') return desk(variant, ...args.map(Number));
  if (op === 'C') return `<circle class="ring" cx="${args[0]}" cy="${args[1]}" r="${args[2]}"/>`;
  const [w, h] = op.endsWith('1') ? [4, 3] : [12, 8];
  return args.map(p => {
    const [x, y] = p.split(',').map(Number);
    return rect('node-' + op[0], x - w / 2, y - h / 2, w, h);
  }).join('');
}

document.getElementById('graph').innerHTML = graph.map(([x, y, sx, sy, list]) =>
  `<g transform="translate(${x} ${y}) scale(${sx} ${sy})">${list.trim().split('\n').map(draw).join('')}</g>`
).join('');
```
